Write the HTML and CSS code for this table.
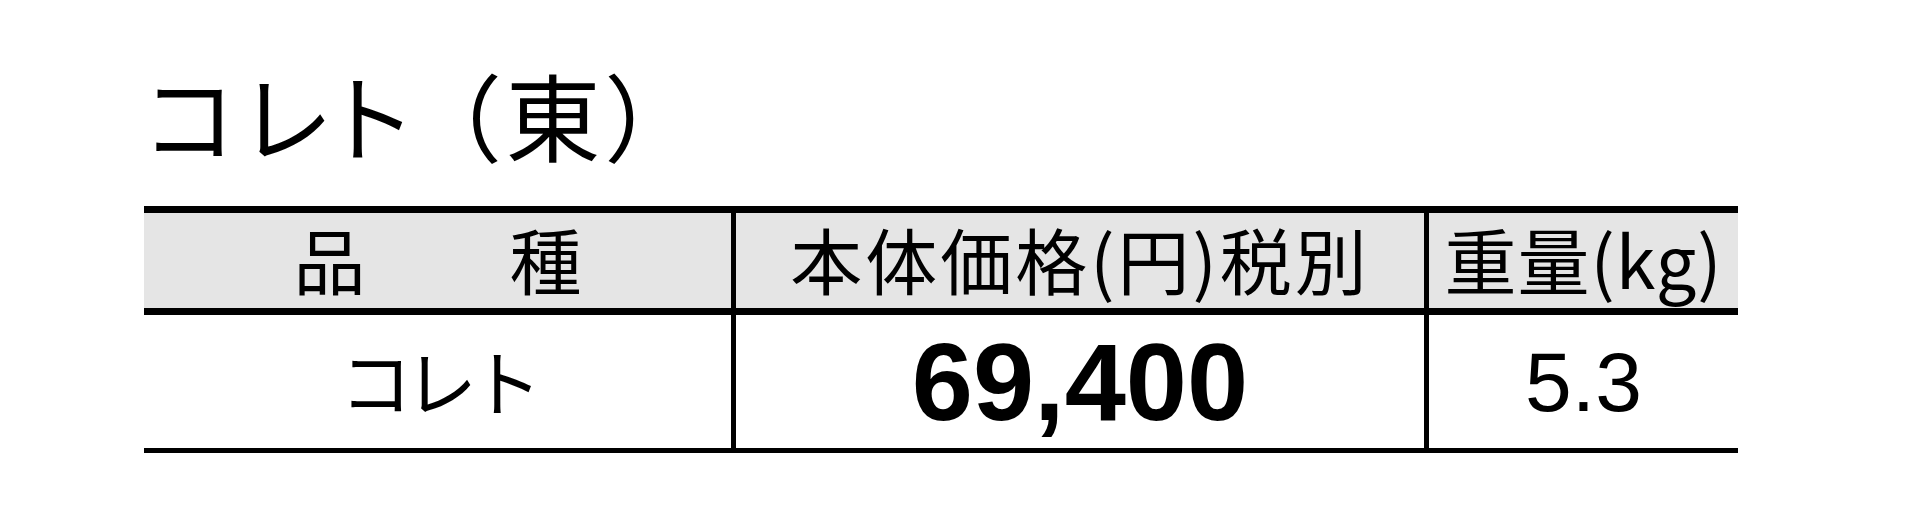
FILE: index.html
```html
<!DOCTYPE html>
<html lang="ja">
<head>
<meta charset="utf-8">
<title>コレト（東）</title>
<link rel="stylesheet" href="styles.css">
</head>
<body>
<h1 class="title">コレト<span class="region">（東）</span></h1>
<div class="spec">
  <div class="cell head c1">品　　種</div>
  <div class="cell head c2">本体価格(円)税別</div>
  <div class="cell head c3">重量(kg)</div>
  <div class="cell body c1 name">コレト</div>
  <div class="cell body c2 price">69,400</div>
  <div class="cell body c3 weight">5.3</div>
</div>
</body>
</html>
```

FILE: styles.css
```css
html, body {
  margin: 0;
  padding: 0;
  background: #ffffff;
}

body {
  width: 1922px;
  height: 518px;
  overflow: hidden;
  color: #000;
  font-family: "Noto Sans CJK JP", "Noto Sans", sans-serif;
}

.title {
  margin: 0;
  padding: 66px 0 0 146px;
  height: 95px;
  line-height: 95px;
  font-size: 95px;
  font-weight: 400;
  letter-spacing: 8px;
  font-feature-settings: "palt";
}

.region {
  margin-left: 34px;
  letter-spacing: 7px;
}

.spec {
  margin: 45px 0 0 144px;
  width: 1594px;
  display: grid;
  grid-template-columns: 592px 693px 1fr;
  border-top: 7px solid #000;
  border-bottom: 5px solid #000;
}

.cell {
  display: flex;
  align-items: center;
  justify-content: center;
  line-height: 1;
  white-space: pre;
}

.c1, .c2 {
  border-right: 5px solid #000;
}

.head {
  box-sizing: border-box;
  height: 102px;
  padding-bottom: 6px;
  background: #e5e5e5;
  border-bottom: 7px solid #000;
  font-size: 72px;
}

.head.c2 {
  letter-spacing: 3px;
}

.head.c3 {
  letter-spacing: 1px;
}

.body {
  height: 133px;
}

.name {
  box-sizing: border-box;
  padding-bottom: 6px;
  font-size: 72px;
  letter-spacing: -7px;
}

.price {
  font-family: "Liberation Sans", Arial, sans-serif;
  font-weight: 700;
  font-size: 110px;
}

.weight {
  font-family: "Liberation Sans", Arial, sans-serif;
  font-size: 84px;
}
```
